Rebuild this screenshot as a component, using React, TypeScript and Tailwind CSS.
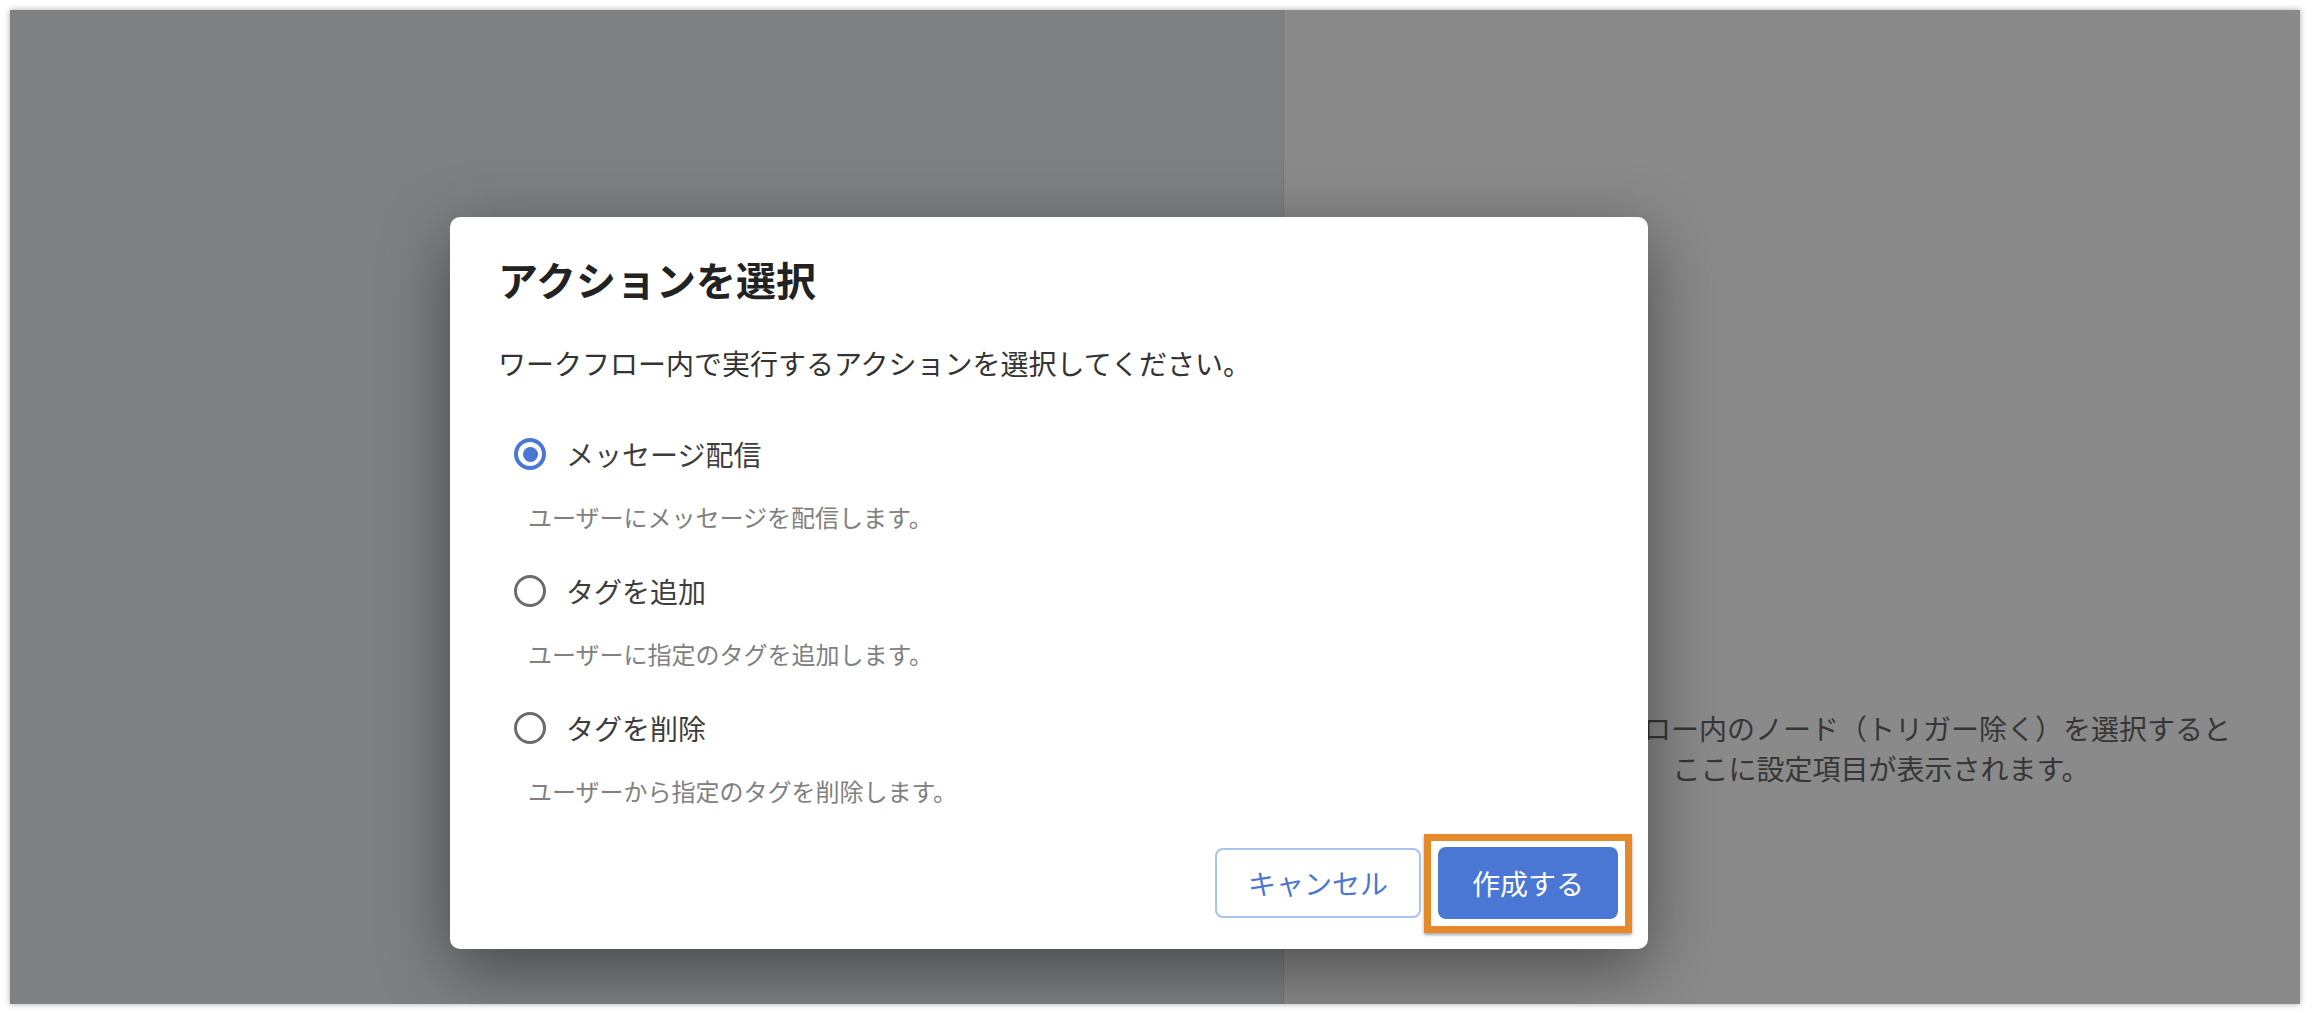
import React, { useState } from 'react';

type Option = {
  id: string;
  label: string;
  description: string;
};

const options: Option[] = [
  { id: 'message', label: 'メッセージ配信', description: 'ユーザーにメッセージを配信します。' },
  { id: 'add-tag', label: 'タグを追加', description: 'ユーザーに指定のタグを追加します。' },
  { id: 'remove-tag', label: 'タグを削除', description: 'ユーザーから指定のタグを削除します。' },
];

const Radio = ({ checked }: { checked: boolean }) => {
  if (checked) {
    return (
      <span className="flex h-[32px] w-[32px] shrink-0 items-center justify-center rounded-full border-[4px] border-[#4a77d4] bg-white">
        <span className="h-[15px] w-[15px] rounded-full bg-[#4a77d4]" />
      </span>
    );
  }
  return <span className="h-[32px] w-[32px] shrink-0 rounded-full border-[3px] border-[#6b6b6b] bg-white" />;
};

const App = () => {
  const [selected, setSelected] = useState('message');

  return (
    <div
      className="h-[1014px] w-[2312px] bg-white p-[10px]"
      style={{ fontFamily: '"Noto Sans CJK JP", "Noto Sans", sans-serif' }}
    >
      <div className="relative flex h-[994px] w-[2290px] overflow-hidden shadow-[0_0_6px_rgba(0,0,0,0.35)]">
        {/* left pane (workflow canvas under overlay) */}
        <div className="h-full w-[1273px] bg-[#7f8082]" />
        {/* right pane */}
        <div className="flex h-full flex-1 flex-col items-center border-l border-[#777777] bg-[#8a8a8a] pl-[178px] pt-[698px]">
          <p className="text-center text-[28px] leading-[40px] text-[#363636]">
            ワークフロー内のノード（トリガー除く）を選択すると
            <br />
            ここに設定項目が表示されます。
          </p>
        </div>

        {/* modal */}
        <div className="absolute left-[440px] top-[207px] flex w-[1198px] flex-col rounded-[10px] bg-white pb-[30px] pl-[48px] pr-[30px] pt-[32px] shadow-[0_20px_70px_rgba(0,0,0,0.45)]">
          <h2 className="text-[40px] font-bold leading-[60px] text-[#222222]">アクションを選択</h2>
          <p className="mt-[33px] text-[28px] leading-[42px] text-[#333333]">
            ワークフロー内で実行するアクションを選択してください。
          </p>

          <div className="mt-[49px] flex flex-col gap-[35px] pl-[16px]">
            {options.map((option) => (
              <div key={option.id} className="flex flex-col">
                <button
                  type="button"
                  onClick={() => setSelected(option.id)}
                  className="flex h-[42px] items-center gap-[20px] text-left"
                >
                  <Radio checked={selected === option.id} />
                  <span className="text-[28px] leading-[42px] text-[#3d3d3d]">{option.label}</span>
                </button>
                <p className="mt-[24px] pl-[14px] text-[24px] leading-[36px] text-[#808080]">{option.description}</p>
              </div>
            ))}
          </div>

          <div className="mt-[38px] flex items-center justify-end gap-[17px]">
            <button
              type="button"
              className="h-[70px] rounded-[8px] border-2 border-[#a9c4ee] bg-white px-[31px] text-[28px] leading-[40px] text-[#4a77d4]"
            >
              キャンセル
            </button>
            <div className="relative">
              <button
                type="button"
                className="h-[72px] w-[180px] rounded-[8px] bg-[#4a77d4] text-[28px] leading-[40px] text-white"
              >
                作成する
              </button>
              <span className="pointer-events-none absolute -bottom-[14px] -left-[14px] -right-[14px] -top-[13px] border-[7px] border-[#e5892a] shadow-[0_2px_3px_rgba(0,0,0,0.35)]" />
            </div>
          </div>
        </div>
      </div>
    </div>
  );
};

export default App;
